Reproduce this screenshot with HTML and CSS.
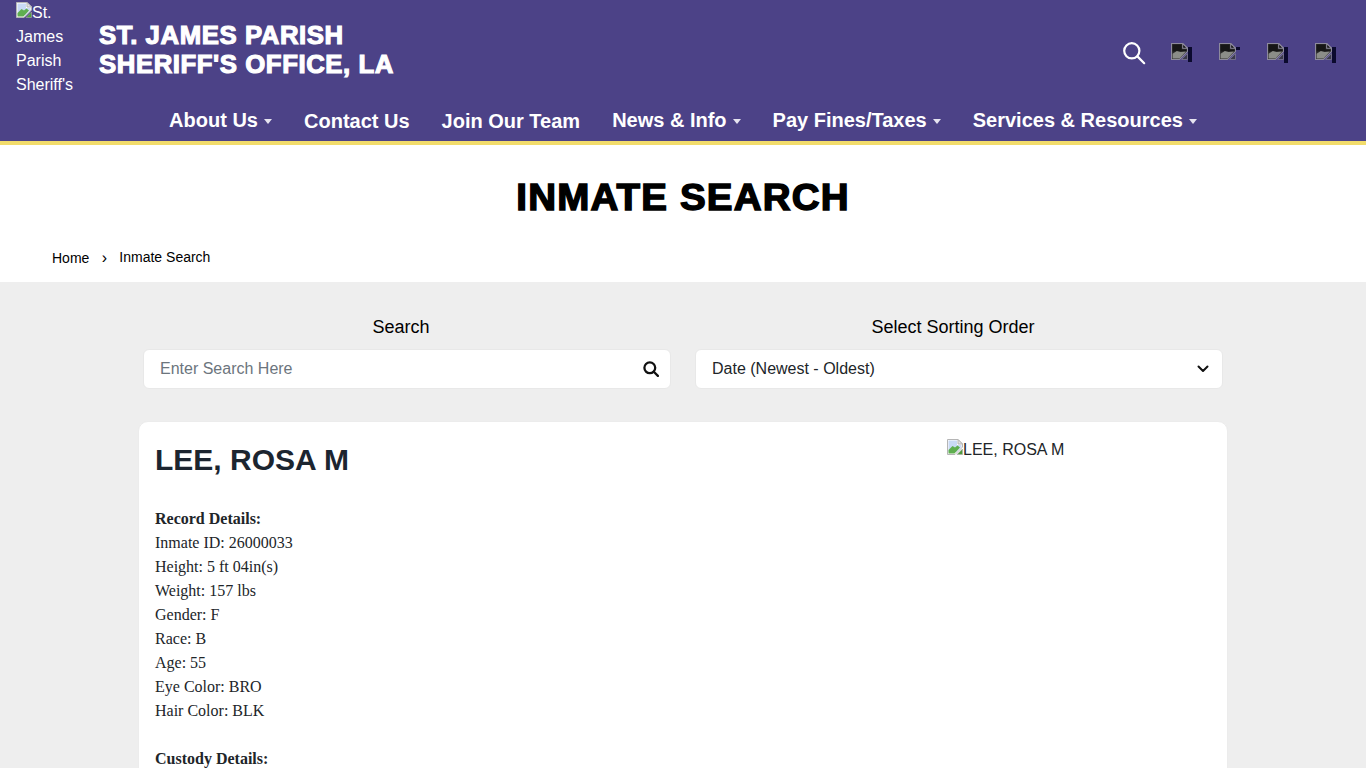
FILE: index.html
```html
<!DOCTYPE html>
<html lang="en">
<head>
<meta charset="utf-8">
<title>Inmate Search</title>
<link rel="stylesheet" href="styles.css">
</head>
<body>
<svg class="sprite" width="0" height="0" aria-hidden="true">
  <symbol id="broken" viewBox="0 0 16 16">
    <path d="M.5 .5H11L15.5 5V8L8 15.5H.5Z" fill="#fff" stroke="#b5b5b5"/>
    <path d="M11 .5V5H15.5Z" fill="#e4e4e4" stroke="#b5b5b5"/>
    <path d="M1.5 1.5H10V6H14.5V8L9.5 13H1.5Z" fill="#c9daf6"/>
    <path d="M1.5 14.5V11L5.5 7L8 8.5L10.5 6.5L13 8.5L7.5 14.5Z" fill="#5fae4f"/>
    <path d="M10 15.5L15.5 10V15.5Z" fill="#4e9b3c" stroke="#a9a9a9" stroke-width=".6"/>
  </symbol>
  <symbol id="darkbroken" viewBox="0 0 16 16">
    <path d="M.5 .5H11L15.5 5V8L8 15.5H.5Z" fill="#2e2e2e" stroke="#8d8a9c"/>
    <path d="M11 .5V5H15.5Z" fill="#0d0d0d" stroke="#8d8a9c"/>
    <path d="M1.5 1.5H10V6H14.5V8H1.5Z" fill="#161616"/>
    <path d="M1.5 14.5V10L5.5 7.5L9 8.5L14 8L8 14.5Z" fill="#8b8d88"/>
    <path d="M10 15.5L15.5 10V15.5Z" fill="#3a3a4a" stroke="#8d8a9c" stroke-width=".6"/>
  </symbol>
</svg>
<header class="site-header">
  <div class="brand-row">
    <a class="logo" href="#"><svg class="broken-icon"><use href="#broken"/></svg>St. James Parish Sheriff's</a>
    <h1 class="site-name">ST. JAMES PARISH<br>SHERIFF'S OFFICE, LA</h1>
    <div class="header-tools">
      <svg class="tool-search" viewBox="0 0 24 24" fill="none" stroke="#fff" stroke-width="2.2" stroke-linecap="round"><circle cx="9.8" cy="9.8" r="7.6"/><path d="M15.4 15.4L22.2 22.2"/></svg>
      <span class="social"><svg class="social-icon"><use href="#darkbroken"/></svg><i class="glyph glyph-a"></i></span>
      <span class="social"><svg class="social-icon"><use href="#darkbroken"/></svg><i class="glyph glyph-b"></i></span>
      <span class="social"><svg class="social-icon"><use href="#darkbroken"/></svg><i class="glyph glyph-c"></i></span>
      <span class="social"><svg class="social-icon"><use href="#darkbroken"/></svg><i class="glyph glyph-d"></i></span>
    </div>
  </div>
  <nav class="main-nav">
    <a class="nav-link caret" href="#">About Us</a>
    <a class="nav-link low" href="#">Contact Us</a>
    <a class="nav-link low" href="#">Join Our Team</a>
    <a class="nav-link caret" href="#">News &amp; Info</a>
    <a class="nav-link caret" href="#">Pay Fines/Taxes</a>
    <a class="nav-link caret" href="#">Services &amp; Resources</a>
  </nav>
</header>
<section class="title-band">
  <h2 class="page-title">INMATE SEARCH</h2>
  <div class="crumbs"><a class="crumb-home" href="#">Home</a><span class="crumb-sep">›</span><span>Inmate Search</span></div>
</section>
<main class="content">
  <div class="filters">
    <div class="filter">
      <label class="filter-label">Search</label>
      <div class="field">
        <span class="placeholder">Enter Search Here</span>
        <svg class="field-icon" viewBox="0 0 16 16" fill="none" stroke="#111" stroke-width="2.3" stroke-linecap="round"><circle cx="6.8" cy="6.8" r="5.4"/><path d="M10.8 10.8L14.9 14.9"/></svg>
      </div>
    </div>
    <div class="filter">
      <label class="filter-label">Select Sorting Order</label>
      <div class="field field-select">
        <span class="value">Date (Newest - Oldest)</span>
        <svg class="chevron" viewBox="0 0 12 8" fill="none" stroke="#111" stroke-width="2" stroke-linecap="round" stroke-linejoin="round"><path d="M1.5 1.5L6 6L10.5 1.5"/></svg>
      </div>
    </div>
  </div>
  <article class="card">
    <div class="card-main">
      <h3 class="inmate-name">LEE, ROSA M</h3>
      <div class="details">
        <p class="details-block"><b>Record Details:</b><br>Inmate ID: 26000033<br>Height: 5 ft 04in(s)<br>Weight: 157 lbs<br>Gender: F<br>Race: B<br>Age: 55<br>Eye Color: BRO<br>Hair Color: BLK</p>
        <p class="details-block"><b>Custody Details:</b></p>
      </div>
    </div>
    <div class="photo"><svg class="broken-icon"><use href="#broken"/></svg>LEE, ROSA M</div>
  </article>
</main>
</body>
</html>
```
FILE: styles.css
```css
* { box-sizing: border-box; }
html, body { margin: 0; height: 768px; overflow: hidden; }
body { font-family: "Liberation Sans", Arial, sans-serif; font-size: 16px; line-height: 24px; color: #212529; background: #eee; }
a { color: inherit; text-decoration: none; }
.sprite { position: absolute; }
.broken-icon { width: 16px; height: 16px; vertical-align: 0; }

.site-header { background: #4c4287; border-bottom: 4px solid #f2dc6b; height: 145px; color: #fff; }
.brand-row { display: flex; align-items: flex-start; height: 98px; padding-left: 16px; }
.logo { width: 60px; margin-right: 23px; padding-top: 1px; }
.site-name { margin: 21px 0 0; font-size: 25px; line-height: 29px; font-weight: 700; letter-spacing: .55px; -webkit-text-stroke: 1.1px #fff; transform: scaleX(1.03); transform-origin: left center; }
.header-tools { margin-left: auto; display: flex; align-items: center; gap: 24px; padding: 41px 28px 0 0; }
.tool-search { width: 24px; height: 24px; }
.social { width: 24px; height: 24px; position: relative; display: block; }
.social-icon { width: 17px; height: 17px; position: absolute; left: 1px; top: 2px; }
.glyph { position: absolute; background: #0b0a2e; }
.glyph-a { left: 18px; top: 6px; width: 4px; height: 15px; }
.glyph-b { left: 18px; top: 6px; width: 4px; height: 3px; }
.glyph-c { left: 18px; top: 6px; width: 4px; height: 16px; }
.glyph-d { left: 18px; top: 6px; width: 4px; height: 16px; }

.main-nav { display: flex; justify-content: center; height: 43px; gap: 32px; }
.nav-link { font-size: 20px; line-height: 24px; font-weight: 700; margin-top: 10px; }
.nav-link.low { margin-top: 11px; }
.caret::after { content: ""; display: inline-block; margin-left: 6px; vertical-align: 3px; border: 4px solid transparent; border-top: 5px solid #e6e4f0; border-bottom: 0; }

.title-band { background: #fff; height: 137px; }
.page-title { margin: 0; padding-top: 33px; text-align: center; font-size: 36px; line-height: 40px; font-weight: 700; color: #000; letter-spacing: 1.1px; -webkit-text-stroke: 1.4px #000; transform: scaleX(1.07); }
.crumbs { display: flex; align-items: baseline; padding: 28px 0 0 52px; font-size: 14px; line-height: 21px; color: #000; }
.crumb-home { position: relative; top: 1px; }
.crumb-sep { width: 30px; text-align: center; font-size: 16px; position: relative; top: 1px; }

.content { width: 1104px; margin: 0 auto; padding-top: 32px; }
.filters { display: grid; grid-template-columns: 552px 552px; }
.filter { padding-right: 12px; }
.filter-label { display: block; text-align: center; font-size: 18px; line-height: 27px; color: #000; margin-bottom: 8px; }
.field { margin-left: 12px; height: 40px; background: #fff; border: 1px solid #e8e8e8; border-radius: 6px; display: flex; align-items: center; justify-content: space-between; padding: 0 11px 0 16px; }
.field-select { padding-right: 13px; }
.placeholder { color: #6c757d; }
.value { color: #212529; }
.field-icon { width: 16px; height: 16px; }
.chevron { width: 12px; height: 8px; }

.card { margin: 32px 7px 0; background: #fff; border: 1px solid #ececec; border-radius: 10px; padding: 16px; display: flex; height: 400px; }
.card-main { width: 792px; }
.inmate-name { margin: 0 0 25px; font-size: 30px; line-height: 44px; font-weight: 700; color: #1c2530; }
.details { font-family: "Liberation Serif", "Times New Roman", serif; font-size: 16px; line-height: 24px; color: #212529; }
.details-block { margin: 0 0 24px; }
.photo { color: #212529; }
```
